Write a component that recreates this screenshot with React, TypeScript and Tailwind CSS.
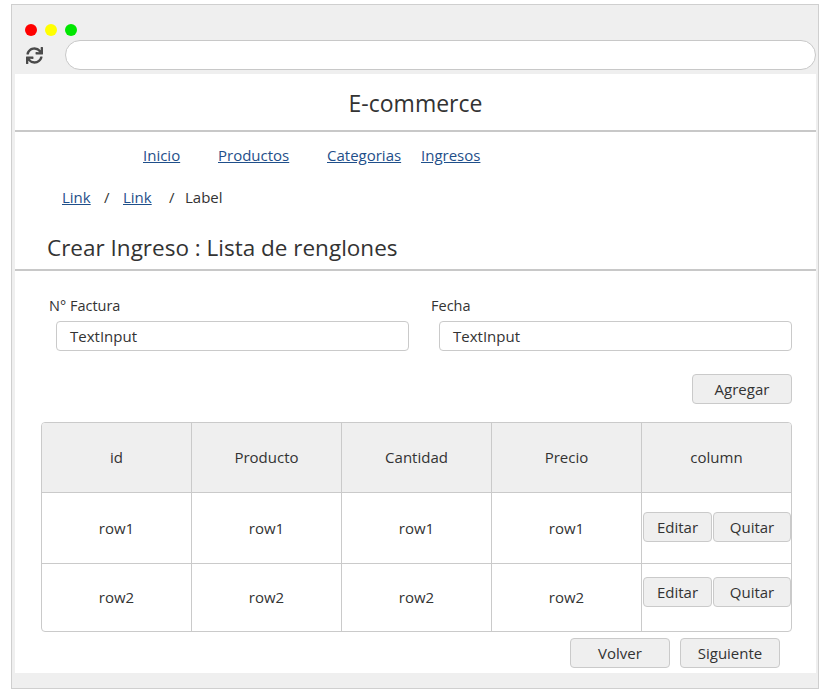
import { FaSync } from "react-icons/fa";

const font = { fontFamily: '"Open Sans", "Noto Sans", sans-serif' };

const Btn = ({ label, className = "" }: { label: string; className?: string }) => (
  <button
    className={`flex h-[30px] items-center justify-center rounded-[4px] border border-[#cacaca] bg-[#efefef] text-[15px] text-[#333] ${className}`}
  >
    {label}
  </button>
);

const headers = ["id", "Producto", "Cantidad", "Precio"];

const App = () => {
  return (
    <div className="h-[696px] w-[825px] bg-white pt-[4px] pl-[11px] text-[#333]" style={font}>
      <div className="flex h-[685px] w-[808px] flex-col border border-[#cfcfcf] bg-[#efefef]">
        {/* browser chrome */}
        <div className="flex gap-[8px] pt-[19px] pl-[13px]">
          <span className="h-[12px] w-[12px] rounded-full bg-[#ff0000]" />
          <span className="h-[12px] w-[12px] rounded-full bg-[#ffff00]" />
          <span className="h-[12px] w-[12px] rounded-full bg-[#00e600]" />
        </div>
        <div className="mt-[4px] flex items-center pl-[14px] pr-[2px]">
          <FaSync className="h-[17px] w-[17px] text-[#4a4a4a]" />
          <div className="ml-[22px] h-[30px] flex-1 rounded-full border border-[#c8c8c8] bg-white" />
        </div>

        {/* page */}
        <div className="mt-[4px] mr-[2px] ml-[3px] flex h-[599px] flex-col bg-white">
          <div className="flex h-[58px] shrink-0 items-center justify-center border-b-2 border-[#c8c8c8] pt-[2px] text-[23px]">
            E-commerce
          </div>

          <nav className="flex h-[47px] shrink-0 items-center pl-[128px] text-[15px] text-[#1f4f8a]">
            <span className="w-[75px]"><a className="underline">Inicio</a></span>
            <span className="w-[109px]"><a className="underline">Productos</a></span>
            <span className="w-[94px]"><a className="underline">Categorias</a></span>
            <span><a className="underline">Ingresos</a></span>
          </nav>

          <div className="flex h-[36px] shrink-0 items-center pl-[47px] text-[15px]">
            <span className="w-[42px]"><a className="text-[#1f4f8a] underline">Link</a></span>
            <span className="w-[19px]">/</span>
            <span className="w-[46px]"><a className="text-[#1f4f8a] underline">Link</a></span>
            <span className="w-[16px]">/</span>
            <span>Label</span>
          </div>

          <div className="flex h-[56px] shrink-0 items-end border-b-2 border-[#c8c8c8] pb-[6px] pl-[32px] text-[22.5px] leading-[30px]">
            Crear Ingreso : Lista de renglones
          </div>

          <div className="grid grid-cols-[382px_1fr] pt-[25px] pl-[34px] text-[14.5px]">
            <div className="flex flex-col">
              <span className="h-[20px] leading-[20px]">N° Factura</span>
              <div className="mt-[5px] ml-[7px] flex h-[30px] w-[353px] items-center rounded-[4px] border border-[#cacaca] pl-[13px] text-[15px]">
                TextInput
              </div>
            </div>
            <div className="flex flex-col">
              <span className="h-[20px] leading-[20px]">Fecha</span>
              <div className="mt-[5px] ml-[8px] flex h-[30px] w-[353px] items-center rounded-[4px] border border-[#cacaca] pl-[13px] text-[15px]">
                TextInput
              </div>
            </div>
          </div>

          <div className="mt-[23px] flex justify-end pr-[24px]">
            <Btn label="Agregar" className="w-[100px]" />
          </div>

          <div className="mt-[18px] mr-[24px] ml-[26px] overflow-hidden rounded-[4px] border border-[#cacaca] text-[15px]">
            <div className="grid h-[69px] grid-cols-[150px_150px_150px_150px_1fr] bg-[#efefef]">
              {headers.map((h) => (
                <div key={h} className="flex items-center justify-center border-r border-[#cacaca]">
                  {h}
                </div>
              ))}
              <div className="flex items-center justify-center">column</div>
            </div>
            {["row1", "row2"].map((r, i) => (
              <div
                key={r}
                className={`grid grid-cols-[150px_150px_150px_150px_1fr] border-t border-[#cacaca] ${i === 0 ? "h-[71px]" : "h-[68px]"}`}
              >
                {headers.map((h) => (
                  <div key={h} className="flex items-center justify-center border-r border-[#cacaca]">
                    {r}
                  </div>
                ))}
                <div className={`flex gap-[1px] pl-[1px] ${i === 0 ? "pt-[19px]" : "pt-[13px]"}`}>
                  <Btn label="Editar" className="w-[69px]" />
                  <Btn label="Quitar" className="flex-1" />
                </div>
              </div>
            ))}
          </div>

          <div className="mt-[6px] flex justify-end gap-[10px] pr-[36px]">
            <Btn label="Volver" className="w-[100px] text-[15.5px]" />
            <Btn label="Siguiente" className="w-[100px] text-[15.5px]" />
          </div>
        </div>
      </div>
    </div>
  );
};

export default App;
